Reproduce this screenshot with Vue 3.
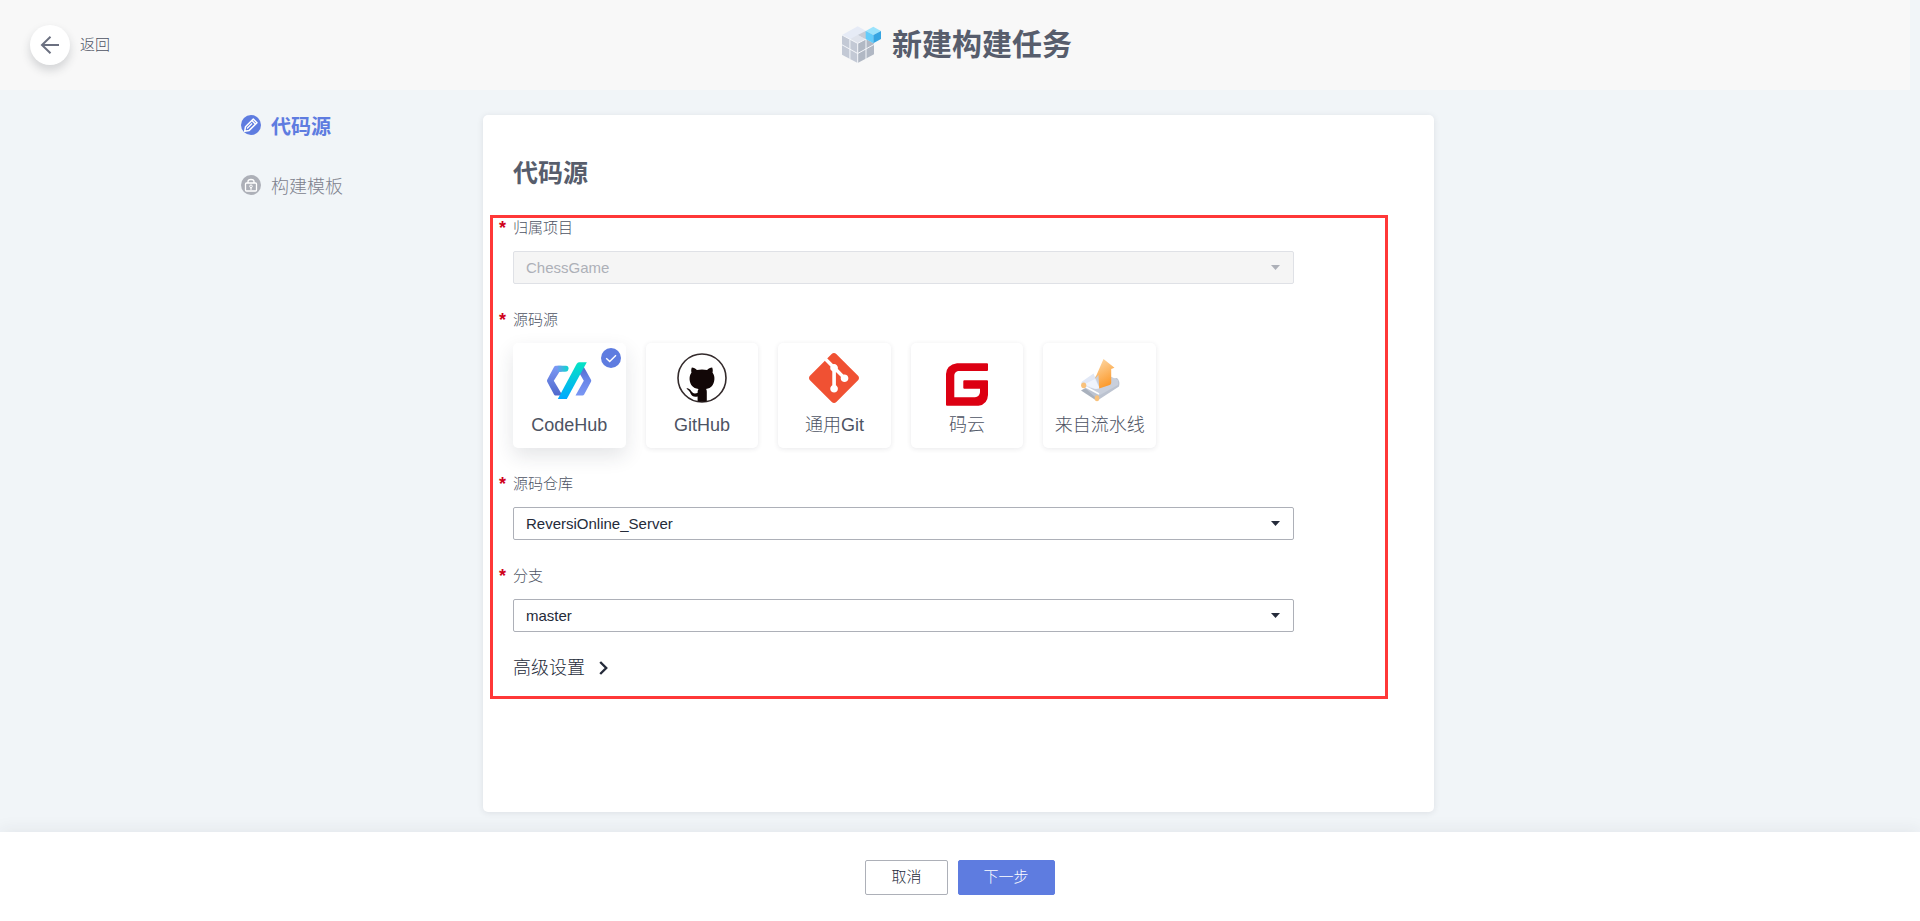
<script setup>
import { ref } from 'vue'

const source = ref('codehub')
const project = ref('ChessGame')
const repo = ref('ReversiOnline_Server')
const branch = ref('master')

const sources = [
  { id: 'codehub', name: 'CodeHub' },
  { id: 'github', name: 'GitHub' },
  { id: 'git', name: '通用Git' },
  { id: 'gitee', name: '码云' },
  { id: 'pipeline', name: '来自流水线' },
]
</script>

<template>
  <div class="page">
    <header class="top">
      <button class="back" type="button">
        <span class="back-circle">
          <svg width="20" height="20" viewBox="0 0 20 20" fill="none" stroke="#6b7080" stroke-width="2">
            <path d="M19 10H2M10.500 1.800 2 10l8.500 8.200" />
          </svg>
        </span>
        <span>返回</span>
      </button>
      <div class="title">
        <svg width="40" height="38" viewBox="0 0 40 38">
          <path d="M15.700.300 31.300 9l-15.600 8.300L0 9z" fill="#e6ebf6" />
          <path d="M23.700 5 31.300 9l-7.800 4.300-7.800-4.300z" fill="#c6cbd5" />
          <path d="M15.700 9l7.800 4.300-7.800 4.200-7.800-4.200z" fill="#dfe3ec" />
          <path d="M0 9l15.700 8.300V37L0 28.700z" fill="#c3c9d5" />
          <path d="M15.700 17.300 24 13l8 4.500v10.800L15.700 37z" fill="#b1b8c4" />
          <path d="M0 9l15.700 8.400L24 13M0 18.800l15.700 8.700L32 18.500M7.900 13.300v19.800M15.700 17.300V37M24 13v20" fill="none" stroke="#f4f6fa" stroke-width="1" />
          <path d="M31.300.700 39 5l-7.700 4-7.600-4z" fill="#9be3fc" />
          <path d="M23.700 5l7.600 4v8.300L23.700 13z" fill="#62ccfb" />
          <path d="M31.300 9 39 5v8l-7.700 4.300z" fill="#36a5e2" />
        </svg>
        <h1>新建构建任务</h1>
      </div>
    </header>

    <main class="main">
      <nav class="steps" aria-label="步骤">
        <a class="step active" href="#source" aria-current="step">
          <svg width="20" height="20" viewBox="0 0 20 20">
            <circle cx="10" cy="10" r="10" fill="#5e7ce0" />
            <path d="M3.700 16.300l.8-4.600 7.800-7.700 3.700 3.700-7.800 7.700z" fill="none" stroke="#fff" stroke-width="1.500" stroke-linejoin="round" />
            <path d="M10.800 5.500l3.700 3.700M6 13.500l5-5" stroke="#fff" stroke-width="1.300" />
          </svg>
          <span>代码源</span>
        </a>
        <a class="step" href="#template">
          <svg width="20" height="20" viewBox="0 0 20 20">
            <circle cx="10" cy="10" r="10" fill="#adb0b8" />
            <path d="M7 8V6.500C7 3.800 13 3.800 13 6.500V8" fill="none" stroke="#fff" stroke-width="1.300" />
            <rect x="4.500" y="8" width="11" height="8" rx="1" fill="none" stroke="#fff" stroke-width="1.300" />
            <circle cx="10" cy="11.300" r="1.300" fill="none" stroke="#fff" />
            <path d="M10 12.500v2.200" stroke="#fff" stroke-width="1.300" />
          </svg>
          <span>构建模板</span>
        </a>
      </nav>

      <section id="source" class="panel">
        <h2>代码源</h2>
        <form class="form" @submit.prevent>
          <div class="field">
            <label class="label" for="project"><span class="star">*</span>归属项目</label>
            <div class="select">
              <select id="project" v-model="project" disabled>
                <option>ChessGame</option>
              </select>
              <svg class="caret" width="9" height="5" viewBox="0 0 9 5"><path d="M0 0h9L4.500 5z" fill="#adb0b8" /></svg>
            </div>
          </div>

          <div class="field" role="radiogroup" aria-labelledby="source-label">
            <span id="source-label" class="label"><span class="star">*</span>源码源</span>
            <div class="sources">
              <label v-for="s in sources" :key="s.id" class="source" :class="{ chosen: source === s.id }">
                <input v-model="source" type="radio" name="source" :value="s.id" />
                <svg v-if="s.id === 'codehub'" class="logo" viewBox="0 0 50 50">
                  <defs>
                    <linearGradient id="ch-slash" x1="0" y1="1" x2="0" y2="0">
                      <stop offset="0" stop-color="#00a8ff" />
                      <stop offset="1" stop-color="#06e3c4" />
                    </linearGradient>
                    <linearGradient id="ch-left" x1="0" y1="0" x2="0" y2="1">
                      <stop offset="0" stop-color="#7d9af5" />
                      <stop offset="1" stop-color="#5068cc" />
                    </linearGradient>
                    <linearGradient id="ch-right" x1="0" y1="0" x2="0" y2="1">
                      <stop offset="0" stop-color="#5368c8" />
                      <stop offset=".4" stop-color="#6683e6" />
                      <stop offset="1" stop-color="#7a97f4" />
                    </linearGradient>
                    <linearGradient id="ch-cap" x1="0" y1="0" x2="1" y2="0">
                      <stop offset="0" stop-color="#6d9cf0" />
                      <stop offset="1" stop-color="#08d8cf" />
                    </linearGradient>
                  </defs>
                  <path d="M12 12.700h5.500v6h-2L9.800 27.700l8 13.500-1 1.300H11.500q-1 0-1.500-.9L3.200 28.700q-.5-1 0-2L10 13.900q.6-1.200 2-1.200z" fill="url(#ch-left)" />
                  <path d="M13.500 12.700H22q2.500 0 2.500 2.500 0 3.500-3.500 3.500h-7.500z" fill="url(#ch-cap)" />
                  <path d="M38.500 13.300q1 0 1.500.9L47 26.700q.5 1 0 2l-7 13q-.5.800-1.500.8h-7l8.300-14.800L35 19.500z" fill="url(#ch-right)" />
                  <path d="M35 9.300h7.800L22.800 46h-9l18.800-35q1-1.700 2.400-1.700z" fill="url(#ch-slash)" />
                </svg>
                <svg v-else-if="s.id === 'github'" class="logo" viewBox="0 0 50 50">
                  <circle cx="25" cy="25" r="24" fill="#fff" stroke="#332a2b" stroke-width="1.600" />
                  <path d="M14.900 14.600c1.800.1 3.700 1.300 5 2.400 3.300-.7 6.900-.7 10.200 0 1.300-1.100 3.200-2.300 5-2.400.9 1.800.8 3.700.4 5 3.300 4.200 1.900 10.400-.5 13.400-1.300 1.500-3.300 2.500-6 3 .6.800.8 1.700.8 3v9.200q-4.800 1-9.200 0v-4.800c-3.600.8-5.700-.3-6.900-2.700-1.100-2.300-2.300-3.800-4.100-4.900 0-.8 1.500-.6 2.600.1 1.500 1 2.300 2.600 3.300 3.700 1.300 1.300 3.300 1 5.100.5 0-1.600.2-3 .9-4.100-3-.4-5-1.400-6.400-3-2.600-3-3.800-9.200-.6-13.400-.4-1.300-.5-3.200.4-5z" fill="#120707" />
                </svg>
                <svg v-else-if="s.id === 'git'" class="logo" viewBox="0 0 24 24">
                  <path fill="#f05133" d="M23.546 10.930L13.067.452c-.604-.603-1.582-.603-2.188 0L8.708 2.627l2.760 2.760c.645-.215 1.379-.070 1.889.441.516.515.658 1.258.438 1.900l2.658 2.660c.645-.223 1.387-.078 1.900.435.721.720.721 1.884 0 2.604-.719.719-1.881.719-2.600 0-.539-.541-.674-1.337-.404-1.996L12.860 8.955v6.525c.176.086.342.203.488.348.713.721.713 1.883 0 2.600-.719.721-1.889.721-2.609 0-.719-.719-.719-1.879 0-2.598.182-.180.387-.316.605-.406V8.835c-.217-.091-.424-.222-.600-.401-.545-.545-.676-1.342-.396-2.009L7.636 3.700.450 10.881c-.600.605-.600 1.584 0 2.189l10.480 10.477c.604.604 1.582.604 2.186 0l10.430-10.430c.605-.603.605-1.582 0-2.187" />
                  <path d="M8.200 3.200l3.600 3.600 4.800 4.800M12 7.500v9" fill="none" stroke="#fff" stroke-width="1.500" />
                </svg>
                <svg v-else-if="s.id === 'gitee'" class="logo" viewBox="0 0 50 50">
                  <path fill="#dc0012" d="M45 10.300q1 0 1 1V17q0 1-1 1H16q-3.700 1-3.700 4.500v21.800H33q4.500-.5 5-5v-3.600H22.300q-1 0-1-1v-6.400q0-1 1-1H45q1 0 1 1V42q-.5 9.500-9.500 10.700H5q-1 0-1-1V21q.5-9 11-10.700z" />
                </svg>
                <svg v-else class="logo" viewBox="0 0 50 50">
                  <defs>
                    <linearGradient id="pl-arrow" x1="0" y1="0" x2=".4" y2="1">
                      <stop offset="0" stop-color="#fddcae" />
                      <stop offset="1" stop-color="#fc9a2c" />
                    </linearGradient>
                  </defs>
                  <path d="M6 37.500l6-3.500 12 7-2 7z" fill="#a9b1bd" />
                  <path d="M10 35l14-7 18-3q3.500 3.500 2 8.500L24 46.500q-3 1.500-4-2.500z" fill="#bcc3d0" />
                  <path d="M8 34l16.500 8.300L43 32V27L26 19z" fill="#c9cfdb" />
                  <path d="M6.500 31.500l17.500 9.500" stroke="#fff" stroke-width="1.500" />
                  <path d="M7 28.500 18.500 20.500l6 14.500q-3.500 1.500-6 .5L8 33q-3-2-1-4.500z" fill="#e1e8f6" />
                  <path d="M9 31.500l11-5.500 4.300 9.300q-4 1-6.300-.3z" fill="#f0f4fc" />
                  <path d="M28.500 6 39.500 14.800l-3.300 1.300v14q-.2 1.400-1.500 2L24.200 35.500l-.7-13.500-3.700 4z" fill="url(#pl-arrow)" />
                  <ellipse cx="8.700" cy="32.300" rx="2.600" ry="2.900" fill="#f9c27c" />
                  <ellipse cx="22" cy="45.200" rx="2.300" ry="3" fill="#f9c27c" />
                </svg>
                <span class="source-name">{{ s.name }}</span>
                <svg v-if="source === s.id" class="tick" width="20" height="20" viewBox="0 0 20 20">
                  <circle cx="10" cy="10" r="10" fill="#5e7ce0" />
                  <path d="M5.200 10.200l3.500 3.300 6.300-6.300" fill="none" stroke="#fff" stroke-width="1.400" />
                </svg>
              </label>
            </div>
          </div>

          <div class="field">
            <label class="label" for="repo"><span class="star">*</span>源码仓库</label>
            <div class="select">
              <select id="repo" v-model="repo">
                <option>ReversiOnline_Server</option>
              </select>
              <svg class="caret" width="9" height="5" viewBox="0 0 9 5"><path d="M0 0h9L4.500 5z" fill="#252b3a" /></svg>
            </div>
          </div>

          <div class="field">
            <label class="label" for="branch"><span class="star">*</span>分支</label>
            <div class="select">
              <select id="branch" v-model="branch">
                <option>master</option>
              </select>
              <svg class="caret" width="9" height="5" viewBox="0 0 9 5"><path d="M0 0h9L4.500 5z" fill="#252b3a" /></svg>
            </div>
          </div>

          <button class="advanced" type="button">
            <span>高级设置</span>
            <svg width="9" height="14" viewBox="0 0 9 14" fill="none" stroke="#252b3a" stroke-width="2.400">
              <path d="M1.200 1l6 6-6 6" />
            </svg>
          </button>
        </form>
      </section>
    </main>

    <footer class="bottom">
      <button class="btn" type="button">取消</button>
      <button class="btn primary" type="button">下一步</button>
    </footer>
  </div>
</template>

<style>
body {
  background: #f1f5f8;
}
</style>

<style scoped>
.page,
.page * {
  box-sizing: border-box;
}
.page {
  min-height: 100vh;
  display: flex;
  flex-direction: column;
  background: #f1f5f8;
  color: #4d5363;
  font-family: "Liberation Sans", "Noto Sans CJK SC", sans-serif;
  font-size: 15px;
  font-weight: 300;
  line-height: 20px;
}
button,
select {
  font: inherit;
  color: inherit;
  cursor: pointer;
}
h1,
h2 {
  margin: 0;
  color: #575d6c;
  font-weight: bold;
}
.top {
  display: grid;
  grid-template-columns: 1fr auto 1fr;
  align-items: center;
  height: 90px;
  margin-right: 10px;
  padding: 0 26px 0 30px;
  background: #f8f8f8;
}
.back {
  justify-self: start;
  display: flex;
  align-items: center;
  gap: 10px;
  padding: 0;
  border: 0;
  background: none;
}
.back-circle {
  display: grid;
  place-items: center;
  width: 40px;
  height: 40px;
  border-radius: 50%;
  background: #fff;
  box-shadow: 0 5px 10px rgba(37, 43, 58, 0.18);
}
.title {
  display: flex;
  align-items: center;
  gap: 10px;
}
.title h1 {
  font-size: 30px;
  line-height: 40px;
}
.main {
  flex: 1;
  display: grid;
  grid-template-columns: 483fr 951fr 486fr;
  padding: 25px 0 20px;
}
.steps {
  justify-self: end;
  width: 242px;
  display: flex;
  flex-direction: column;
  align-items: flex-start;
  gap: 36px;
}
.step {
  display: flex;
  gap: 10px;
  color: #7d818d;
  font-size: 18px;
  line-height: 24px;
  text-decoration: none;
}
.step.active {
  color: #5e7ce0;
  font-size: 20px;
  font-weight: bold;
}
.panel {
  padding: 38px 46px 50px 7px;
  border-radius: 5px;
  background: #fff;
  box-shadow: 0 1px 6px rgba(37, 43, 58, 0.1);
}
.panel h2 {
  margin: 0 0 22px 23px;
  font-size: 25px;
  line-height: 40px;
}
.form {
  display: flex;
  flex-direction: column;
  align-items: stretch;
  gap: 26px;
  padding: 0 91px 18px 20px;
  border: 3px solid #ff3838;
}
.field {
  display: flex;
  flex-direction: column;
  gap: 13px;
}
.label {
  display: flex;
  margin-left: -14px;
}
.star {
  width: 14px;
  color: #d0021b;
  font-size: 18px;
  font-weight: bold;
}
.select {
  position: relative;
}
.select select {
  display: block;
  width: 100%;
  height: 33px;
  padding: 0 30px 0 12px;
  border: 1px solid #adb0b8;
  border-radius: 2px;
  background: #fff;
  color: #252b3a;
  appearance: none;
}
.select select:disabled {
  border-color: #dfe1e6;
  background: #f5f5f5;
  color: #adb0b8;
  opacity: 1;
}
.caret {
  position: absolute;
  top: 14px;
  right: 14px;
  pointer-events: none;
}
.sources {
  display: grid;
  grid-template-columns: repeat(5, 1fr);
  gap: 20px;
  width: 643px;
  max-width: 100%;
}
.source {
  position: relative;
  display: flex;
  flex-direction: column;
  align-items: center;
  gap: 10px;
  padding: 10px 0 11px;
  border-radius: 5px;
  background: #fff;
  box-shadow: 0 1px 5px rgba(37, 43, 58, 0.1);
  cursor: pointer;
}
.source.chosen {
  box-shadow: 0 8px 20px rgba(37, 43, 58, 0.12);
}
.source input {
  position: absolute;
  opacity: 0;
}
.logo {
  width: 50px;
  height: 50px;
  overflow: visible;
}
.source-name {
  font-size: 18px;
  line-height: 24px;
  white-space: nowrap;
}
.tick {
  position: absolute;
  top: 5px;
  right: 5px;
}
.advanced {
  align-self: flex-start;
  display: flex;
  align-items: center;
  gap: 14px;
  padding: 0;
  border: 0;
  background: none;
  color: #252b3a;
  font-size: 18px;
  line-height: 20px;
}
.bottom {
  position: relative;
  display: flex;
  justify-content: center;
  gap: 10px;
  padding: 28px 20px 26px;
  background: #fff;
  box-shadow: 0 -2px 16px rgba(37, 43, 58, 0.07);
}
.btn {
  height: 35px;
  padding: 0 25px 2px;
  border: 1px solid #adb0b8;
  border-radius: 2px;
  background: #fff;
  color: #252b3a;
}
.btn.primary {
  border-color: #5e7ce0;
  background: #5e7ce0;
  color: #fff;
}
</style>
